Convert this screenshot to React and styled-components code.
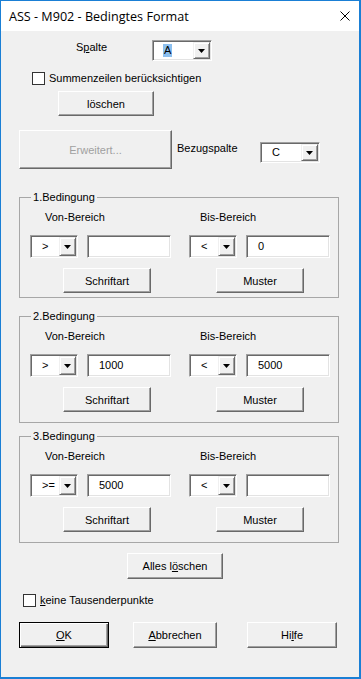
import React from "react";
import styled, { createGlobalStyle } from "styled-components";

const GlobalStyle = createGlobalStyle`
  html, body {
    margin: 0;
    padding: 0;
    background: #fff;
  }
  body {
    font-family: "Liberation Sans", Arial, sans-serif;
    font-size: 11px;
    color: #000;
  }
  * {
    box-sizing: border-box;
  }
`;

const Window = styled.div`
  width: 361px;
  height: 679px;
  border: 1px solid #1a7fd5;
  border-right-width: 2px;
  border-bottom-width: 2px;
  display: flex;
  flex-direction: column;
  overflow: hidden;
`;

const TitleBar = styled.div`
  flex: none;
  height: 30px;
  background: #fff;
  display: flex;
  align-items: center;
  justify-content: space-between;
  padding: 0 9px 0 8px;
  font-family: "Open Sans", "Noto Sans", sans-serif;
  font-size: 12.6px;
`;

const Body = styled.div`
  flex: 1;
  background: #f0f0f0;
  display: flex;
  flex-direction: column;
  align-items: flex-start;
`;

const Row = styled.div`
  display: flex;
  align-items: ${(p) => p.$align || "flex-start"};
  margin: ${(p) => p.$top || 0}px 0 0 ${(p) => p.$left || 0}px;
  gap: ${(p) => p.$gap || 0}px;
`;

const Label = styled.span`
  flex: none;
  width: ${(p) => (p.$w ? `${p.$w}px` : "auto")};
  margin-top: ${(p) => p.$top || 0}px;
  padding-left: ${(p) => p.$pad || 0}px;
  line-height: 13px;
  white-space: nowrap;
`;

const Key = styled.span`
  text-decoration: underline;
  text-underline-offset: 1px;
`;

const Button = styled.button`
  flex: none;
  width: ${(p) => p.$w}px;
  height: ${(p) => p.$h || 25}px;
  margin: ${(p) => p.$top || 0}px 0 0 ${(p) => p.$left || 0}px;
  padding: 0;
  font: inherit;
  color: ${(p) => (p.disabled ? "#a0a0a0" : "#000")};
  background: #f0f0f0;
  border: 1px solid;
  border-color: ${(p) => (p.$default ? "#000" : "#fff #696969 #696969 #fff")};
  box-shadow: ${(p) =>
    p.$default
      ? "inset 1px 1px #fff, inset -1px -1px #696969, inset -2px -2px #a0a0a0"
      : "inset -1px -1px #a0a0a0"};
`;

const Sunken = styled.div`
  flex: none;
  width: ${(p) => p.$w}px;
  height: ${(p) => p.$h || 23}px;
  margin-top: ${(p) => p.$top || 0}px;
  background: #fff;
  border: 1px solid;
  border-color: #a0a0a0 #fff #fff #a0a0a0;
  box-shadow: inset 1px 1px #696969, inset -1px -1px #e3e3e3;
  display: flex;
  align-items: center;
  justify-content: space-between;
  padding: 1px 1px 1px 11px;
`;

const Value = styled.span`
  line-height: 13px;
  white-space: nowrap;
  background: ${(p) => (p.$selected ? "#8cbfee" : "transparent")};
  padding: 0 ${(p) => (p.$selected ? 1 : 0)}px;
  margin-left: ${(p) => (p.$selected ? -1 : 0)}px;
`;

const DropButton = styled.span`
  flex: none;
  align-self: stretch;
  width: 17px;
  background: #f0f0f0;
  border: 1px solid;
  border-color: #f0f0f0 #696969 #696969 #f0f0f0;
  box-shadow: inset 1px 1px #fff, inset -1px -1px #a0a0a0;
  display: flex;
  align-items: center;
  justify-content: center;
`;

const CheckBox = styled.span`
  flex: none;
  width: 13px;
  height: 13px;
  background: #fff;
  border: 1px solid #333;
`;

const Group = styled.div`
  position: relative;
  flex: none;
  width: 320px;
  height: ${(p) => p.$h}px;
  margin: ${(p) => p.$top}px 0 0 18px;
  border: 1px solid #a7a7a7;
  display: flex;
`;

const Legend = styled.span`
  position: absolute;
  top: -7px;
  left: 11px;
  padding: 0 2px;
  background: #f0f0f0;
  line-height: 13px;
`;

const Column = styled.div`
  width: 159px;
  display: flex;
  flex-direction: column;
  align-items: flex-start;
`;

const Caption = styled.span`
  margin: 13px 0 0 ${(p) => p.$left}px;
  line-height: 13px;
`;

const Fields = styled.div`
  display: flex;
  gap: 9px;
  margin: 11px 0 0 10px;
`;

const Arrow = () => (
  <svg width="7" height="4" viewBox="0 0 7 4">
    <polygon points="0,0 7,0 3.5,4" fill="#000" />
  </svg>
);

const CloseIcon = () => (
  <svg width="10" height="10" viewBox="0 0 10 10">
    <path d="M0.5 0.5 L9.5 9.5 M9.5 0.5 L0.5 9.5" stroke="#000" strokeWidth="1" />
  </svg>
);

function Combo({ w, h, top, value, selected }) {
  return (
    <Sunken $w={w} $h={h} $top={top}>
      <Value $selected={selected}>{value}</Value>
      <DropButton>
        <Arrow />
      </DropButton>
    </Sunken>
  );
}

function Side({ caption, captionLeft, buttonLeft, op, value, button }) {
  return (
    <Column>
      <Caption $left={captionLeft}>{caption}</Caption>
      <Fields>
        <Combo w={48} value={op} />
        <Sunken $w={84}>
          <Value>{value}</Value>
        </Sunken>
      </Fields>
      <Button $w={88} $top={10} $left={buttonLeft}>
        {button}
      </Button>
    </Column>
  );
}

const conditions = [
  { n: 1, h: 101, top: 28, von: ">", vonVal: "", bis: "<", bisVal: "0" },
  { n: 2, h: 107, top: 18, von: ">", vonVal: "1000", bis: "<", bisVal: "5000" },
  { n: 3, h: 107, top: 13, von: ">=", vonVal: "5000", bis: "<", bisVal: "" },
];

export default function App() {
  return (
    <>
      <GlobalStyle />
      <Window>
        <TitleBar>
          <span>ASS - M902 - Bedingtes Format</span>
          <CloseIcon />
        </TitleBar>
        <Body>
          <Row $top={9} $left={75}>
            <Label $w={76} $top={1}>
              S<Key>p</Key>alte
            </Label>
            <Combo w={60} h={21} value="A" selected />
          </Row>

          <Row $top={11} $left={31} $gap={4} $align="center">
            <CheckBox />
            <Label>Summenzeilen berücksichtigen</Label>
          </Row>

          <Button $w={96} $top={6} $left={57}>
            löschen
          </Button>

          <Row $top={14} $left={18}>
            <Button $w={153} $h={39} disabled>
              Erweitert...
            </Button>
            <Label $w={88} $top={12} $pad={5}>
              Bezugspalte
            </Label>
            <Combo w={60} h={21} top={12} value="C" />
          </Row>

          {conditions.map((c) => (
            <Group key={c.n} $h={c.h} $top={c.top}>
              <Legend>{c.n}.Bedingung</Legend>
              <Side
                caption="Von-Bereich"
                captionLeft={25}
                buttonLeft={43}
                op={c.von}
                value={c.vonVal}
                button="Schriftart"
              />
              <Side
                caption="Bis-Bereich"
                captionLeft={21}
                buttonLeft={37}
                op={c.bis}
                value={c.bisVal}
                button="Muster"
              />
            </Group>
          ))}

          <Button $w={96} $h={26} $top={10} $left={126}>
            Alles l<Key>ö</Key>schen
          </Button>

          <Row $top={15} $left={22} $gap={4} $align="center">
            <CheckBox />
            <Label>
              <Key>k</Key>eine Tausenderpunkte
            </Label>
          </Row>

          <Row $top={15} $left={18}>
            <Button $w={90} $h={26} $default>
              <Key>O</Key>K
            </Button>
            <Button $w={84} $h={26} $left={24}>
              <Key>A</Key>bbrechen
            </Button>
            <Button $w={90} $h={26} $left={30}>
              Hi<Key>l</Key>fe
            </Button>
          </Row>
        </Body>
      </Window>
    </>
  );
}
